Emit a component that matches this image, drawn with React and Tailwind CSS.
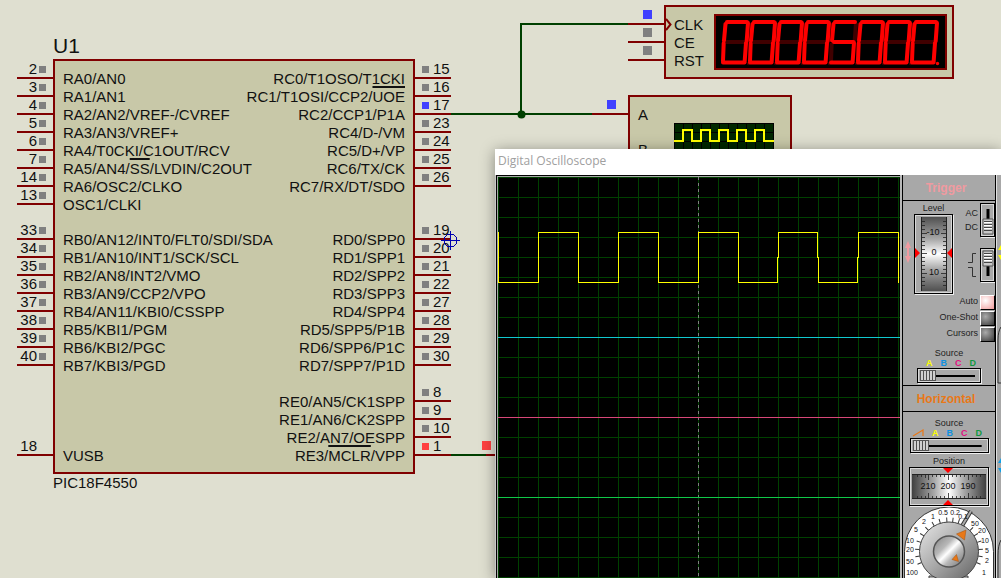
const LEFT_PINS = [
    { n: 2, label: "RA0/AN0" },
    { n: 3, label: "RA1/AN1" },
    { n: 4, label: "RA2/AN2/VREF-/CVREF" },
    { n: 5, label: "RA3/AN3/VREF+" },
    { n: 6, label: "RA4/T0CKI/C1OUT/RCV" },
    { n: 7, label: <>RA5/AN4/<span className="overline decoration-2">SS</span>/LVDIN/C2OUT</> },
    { n: 14, label: "RA6/OSC2/CLKO" },
    { n: 13, label: "OSC1/CLKI" },
    { n: 33, label: "RB0/AN12/INT0/FLT0/SDI/SDA", first: "mt-[17px]" },
    { n: 34, label: "RB1/AN10/INT1/SCK/SCL" },
    { n: 35, label: "RB2/AN8/INT2/VMO" },
    { n: 36, label: "RB3/AN9/CCP2/VPO" },
    { n: 37, label: "RB4/AN11/KBI0/CSSPP" },
    { n: 38, label: "RB5/KBI1/PGM" },
    { n: 39, label: "RB6/KBI2/PGC" },
    { n: 40, label: "RB7/KBI3/PGD" },
    { n: 18, label: "VUSB", first: "mt-[72px]", state: "bg-transparent" },
];

const RIGHT_PINS = [
    { n: 15, label: "RC0/T1OSO/T1CKI" },
    { n: 16, label: <>RC1/T1OSI/CCP2/<span className="overline decoration-2">UOE</span></> },
    { n: 17, label: "RC2/CCP1/P1A", state: "bg-[#4040ff]" },
    { n: 23, label: "RC4/D-/VM" },
    { n: 24, label: "RC5/D+/VP" },
    { n: 25, label: "RC6/TX/CK" },
    { n: 26, label: "RC7/RX/DT/SDO" },
    { n: 19, label: "RD0/SPP0", first: "mt-[35px]" },
    { n: 20, label: "RD1/SPP1" },
    { n: 21, label: "RD2/SPP2" },
    { n: 22, label: "RD3/SPP3" },
    { n: 27, label: "RD4/SPP4" },
    { n: 28, label: "RD5/SPP5/P1B" },
    { n: 29, label: "RD6/SPP6/P1C" },
    { n: 30, label: "RD7/SPP7/P1D" },
    { n: 8, label: "RE0/AN5/CK1SPP", first: "mt-[18px]" },
    { n: 9, label: "RE1/AN6/CK2SPP" },
    { n: 10, label: "RE2/AN7/OESPP" },
    { n: 1, label: <>RE3/<span className="overline decoration-2">MCLR</span>/VPP</>, state: "bg-[#ff4040]" },
];

const PinColumn = ({ pins, right }) => (
    <ul className="w-9 shrink-0 pt-[2px]">
        {pins.map(({ n, first, state }) => (
            <li
                key={n}
                className={`flex h-[18px] items-center border-b-2 border-[#800000] leading-[18px] ${right ? "flex-row-reverse justify-end gap-1 pl-[7px]" : "justify-end gap-[2px] pr-[7px]"} ${first || ""}`}
            >
                <span>{n}</span>
                <span className={`size-[7px] ${state || "bg-[#808080]"}`} />
            </li>
        ))}
    </ul>
);

// the widest names of the two sides never share a row, so the right column may grow over the left one
const LabelColumn = ({ pins, right }) => (
    <ul className={`pt-[9px] whitespace-nowrap ${right ? "w-0" : ""}`}>
        {pins.map(({ n, label, first }) => (
            <li key={n} className={`flex h-[18px] leading-[18px] ${right ? "justify-end" : ""} ${first || ""}`}>
                <span>{label}</span>
            </li>
        ))}
    </ul>
);

const Chip = () => (
    <section className="absolute left-[17px] top-[32px]">
        <h2 className="pl-9 text-[21px] leading-[27px]">U1</h2>
        <div className="flex">
            <PinColumn pins={LEFT_PINS} />
            <div className="flex h-[415px] w-[362px] justify-between border-2 border-[#800000] bg-[#c8c8a8] px-2">
                <LabelColumn pins={LEFT_PINS} />
                <LabelColumn pins={RIGHT_PINS} right />
            </div>
            <PinColumn pins={RIGHT_PINS} right />
        </div>
        <p className="pl-9 leading-[18px]">PIC18F4550</p>
    </section>
);

const Wires = () => (
    <svg className="absolute left-0 top-0" width="700" height="500" fill="none" strokeWidth="2">
        <path d="M451 114H592M521 114V24H628M451 455H486" stroke="#004000" />
        <path d="M592 114H628M628 24H664M628 42H664M628 60H664M486 455H495" stroke="#800000" />
        <circle cx="521.500" cy="114.500" r="4" fill="#004000" />
        <path d="M643 10h9v9h-9zM607 100h9v9h-9z" fill="#4040ff" />
        <path d="M643 28h9v9h-9zM643 46h9v9h-9z" fill="#808080" />
        <path d="M482 441h9v9h-9z" fill="#ff4040" />
        <g stroke="#0000b0" strokeWidth="1" shapeRendering="crispEdges">
            <circle cx="450.500" cy="240.500" r="6.500" />
            <path d="M450.500 231V250M441 240.500H460" />
        </g>
    </svg>
);

// segments in order a b c d e f g
const SEGMENTS = [
    "M13 8H33",
    "M34 9L32.700 27",
    "M32 29L30.700 47",
    "M9 48.500H30.500",
    "M9.700 29L9 47",
    "M11.500 10L10 26.500",
    "M12 28H31.500",
];
const DIGITS = { 0: "1111110", 5: "1011011" };

const CounterDisplay = ({ value }) => (
    <svg className="block h-[52px] w-[229px]" viewBox="2 2 229 52" role="img" aria-label={value}>
        {value.split("").map((d, i) => (
            <g key={i} transform={`translate(${i * 27} 0)`} fill="none" strokeWidth="4">
                {SEGMENTS.map((p, s) => DIGITS[d][s] === "0" && <path key={s} d={p} stroke="#400000" />)}
                {SEGMENTS.map((p, s) => DIGITS[d][s] === "1" && <path key={s} d={p} stroke="#f00" strokeLinecap="round" />)}
                <circle cx="34.500" cy="49.500" r="1.700" fill={i === 7 ? "#f00" : "#400000"} />
            </g>
        ))}
    </svg>
);

const Counter = () => (
    <section className="absolute left-[664px] top-[5px] flex h-[74px] w-[290px] justify-between border-2 border-[#800000] bg-[#c8c8a8] py-[7px] pl-2 pr-[5px]">
        <svg className="absolute left-0 top-[11px]" width="6" height="13" fill="none">
            <path d="M0 1L4.500 6.500L0 12" stroke="#800000" strokeWidth="2" />
        </svg>
        <ul className="pt-[2px] leading-[18px]">
            <li>CLK</li>
            <li>CE</li>
            <li>RST</li>
        </ul>
        <div className="h-[56px] border-2 border-[#800000] bg-black">
            <CounterDisplay value="00005000" />
        </div>
    </section>
);

const ScopeSymbol = () => (
    <section className="absolute left-[628px] top-[95px] flex h-[120px] w-[164px] justify-between border-2 border-[#800000] bg-[#c8c8a8] pl-2 pr-4">
        <ul className="pt-[9px] leading-[18px]">
            <li>A</li>
            <li className="mt-[17px]">B</li>
        </ul>
        <svg className="mt-[26px]" width="100" height="60" fill="none">
            <rect width="100" height="60" fill="#002800" />
            <path d="M.5 0V60M9.500 0V60M18.500 0V60M27.500 0V60M36.500 0V60M45.500 0V60M54.500 0V60M63.500 0V60M72.500 0V60M81.500 0V60M90.500 0V60M99.500 0V60M0 .5H100M0 9.500H100M0 18.500H100" stroke="#000" />
            <path d="M0 18H9V7H18V18H27V7H36V18H45V7H54V18H63V7H72V18H81V7H90V18H100" stroke="#ff0" strokeWidth="2" />
        </svg>
    </section>
);

const ScopeScreen = () => (
    <div className="min-w-0 flex-1 border-l border-t border-black">
        <svg className="block h-full w-full border-l border-t border-[#a8a8a8] bg-black" fill="none" shapeRendering="crispEdges">
            <defs>
                <pattern id="grid" width="20" height="20" patternUnits="userSpaceOnUse">
                    <path d="M.5 0V20M0 .5H20" stroke="#004000" />
                </pattern>
            </defs>
            <rect width="100%" height="100%" fill="url(#grid)" />
            <path d="M200.500 0V900" stroke="#808080" strokeDasharray="3 3" />
            <path d="M0 160.500H4000" stroke="#10c8d0" />
            <path d="M0 240.500H4000" stroke="#d84878" />
            <path d="M0 320.500H4000" stroke="#10c848" />
            <path
                d="M.5 55V105.500H40.500V55.500H80.500V105.500H120.500V55.500H160.500V105.500H200.500V55.500H240.500V105.500H279.500V80.500H280.500V55.500H319.500V80.500H320.500V105.500H359.500V80.500H360.500V55.500H400.500V105.500"
                stroke="#ff0"
            />
        </svg>
    </div>
);

const BEVEL = "border border-black shadow-[inset_0_0_0_1px_#d8d8d8,1px_1px_0_#eee]";

const ToggleSwitch = ({ label, up }) => (
    <label className={`relative block h-[34px] w-[15px] ${BEVEL}`}>
        <input type="checkbox" defaultChecked={up} aria-label={label} className="absolute inset-0 h-full w-full cursor-pointer opacity-0" />
        <svg width="13" height="32" fill="none">
            <path d="M7 5V27" stroke="#000" strokeWidth="3" />
            <g transform={up ? "translate(2 2)" : "translate(2 15)"}>
                <path d="M0 0H10V15H0Z" fill="#c8c8c8" stroke="#555" />
                <path d="M1 2.500H9M1 5.500H9M1 8.500H9M1 11.500H9" stroke="#444" />
                <path d="M1 3.500H9M1 6.500H9M1 9.500H9" stroke="#fff" />
            </g>
        </svg>
    </label>
);

const PushButton = ({ children, lit }) => (
    <button type="button" className="flex h-4 cursor-pointer items-center justify-end gap-[2px]">
        {children}
        <span
            className={`size-[15px] border border-white border-b-black border-r-black ${lit ? "bg-radial-[at_35%_35%] from-white to-[#f09a9a]" : "bg-radial-[at_35%_35%] from-[#aaa] to-[#383838]"}`}
        />
    </button>
);

const SourceSlider = ({ id, ramp }) => (
    <div className="flex flex-col items-center">
        <label htmlFor={id} className="h-[10px] leading-[10px]">Source</label>
        <div className={`flex h-[10px] items-center gap-2 font-bold leading-[10px] ${ramp ? "pr-1" : "pl-1"}`}>
            {ramp && (
                <svg width="12" height="8" fill="none">
                    <path d="M1 7L11 1V7" stroke="#e87818" strokeWidth="1.200" />
                </svg>
            )}
            <span className="text-[#ffff00]">A</span>
            <span className="text-[#1090e0]">B</span>
            <span className="text-[#e01080]">C</span>
            <span className="text-[#109840]">D</span>
        </div>
        <input
            id={id}
            type="range"
            min="0"
            max="4"
            defaultValue="0"
            className={`h-[15px] cursor-pointer appearance-none bg-[linear-gradient(#000,#000)] bg-[length:84%_2px] bg-center bg-no-repeat px-[2px] [&::-webkit-slider-thumb]:h-[11px] [&::-webkit-slider-thumb]:w-4 [&::-webkit-slider-thumb]:appearance-none [&::-webkit-slider-thumb]:border [&::-webkit-slider-thumb]:border-[#555] [&::-webkit-slider-thumb]:bg-[repeating-linear-gradient(90deg,#d0d0d0_0_2px,#505050_2px_3px)] ${BEVEL} ${ramp ? "w-[79px]" : "w-[64px]"}`}
        />
    </div>
);

const LevelDial = () => (
    <div className={`relative h-[80px] w-[39px] ${BEVEL}`}>
        <input id="level" type="range" min="-100" max="100" className="absolute inset-0 h-full w-full cursor-pointer opacity-0" />
        <svg width="37" height="78">
            <defs>
                <linearGradient id="drumV" x2="0" y2="1">
                    <stop offset="0" stopColor="#505050" />
                    <stop offset=".3" stopColor="#a8a8a8" />
                    <stop offset=".5" stopColor="#fff" />
                    <stop offset=".7" stopColor="#a8a8a8" />
                    <stop offset="1" stopColor="#505050" />
                </linearGradient>
            </defs>
            <rect x="6" y="2" width="26" height="74" fill="url(#drumV)" />
            <path d="M6.500 2V76M31.500 2V76" stroke="#222" />
            <path d="M7 6.500h3M7 10.500h3M7 14.500h3M7 18.500h5M7 22.500h3M7 26.500h3M7 30.500h3M7 34.500h3M7 38.500h5M7 42.500h3M7 46.500h3M7 50.500h3M7 54.500h3M7 58.500h5M7 62.500h3M7 66.500h3M7 70.500h3M28 6.500h3M28 10.500h3M28 14.500h3M26 18.500h5M28 22.500h3M28 26.500h3M28 30.500h3M28 34.500h3M26 38.500h5M28 42.500h3M28 46.500h3M28 50.500h3M28 54.500h3M26 58.500h5M28 62.500h3M28 66.500h3M28 70.500h3" stroke="#222" strokeOpacity=".8" />
            <path d="M0 33L5 38L0 43ZM37 33L32 38L37 43Z" fill="#f00" />
            <g fontSize="9" textAnchor="middle" fill="#111">
                <text x="18" y="20">-10</text>
                <text x="19" y="40">0</text>
                <text x="19" y="60">10</text>
            </g>
        </svg>
    </div>
);

const PositionDial = () => (
    <div className={`relative h-[39px] w-[80px] ${BEVEL}`}>
        <input id="position" type="range" min="0" max="400" className="absolute inset-0 h-full w-full cursor-pointer opacity-0" />
        <svg width="78" height="37">
            <defs>
                <linearGradient id="drumH">
                    <stop offset="0" stopColor="#404040" />
                    <stop offset=".3" stopColor="#a8a8a8" />
                    <stop offset=".5" stopColor="#fff" />
                    <stop offset=".7" stopColor="#a8a8a8" />
                    <stop offset="1" stopColor="#404040" />
                </linearGradient>
            </defs>
            <rect x="2" y="6" width="74" height="25" fill="url(#drumH)" />
            <path d="M2 6.500H76M2 30.500H76" stroke="#222" />
            <path d="M7.500 7v2M11.500 7v2M15.500 7v3M18.500 7v5M22.500 7v2M26.500 7v2M30.500 7v2M34.500 7v2M38.500 7v5M42.500 7v2M46.500 7v2M50.500 7v2M54.500 7v2M58.500 7v5M62.500 7v2M66.500 7v2M70.500 7v2M7.500 30v-2M11.500 30v-2M15.500 30v-2M18.500 30v-5M22.500 30v-2M26.500 30v-2M30.500 30v-2M34.500 30v-2M38.500 30v-5M42.500 30v-2M46.500 30v-2M50.500 30v-2M54.500 30v-2M58.500 30v-5M62.500 30v-2M66.500 30v-2M70.500 30v-2" stroke="#222" strokeOpacity=".8" />
            <path d="M33 0H43L38 5ZM33 37H43L38 32Z" fill="#f00" />
            <g fontSize="9" textAnchor="middle" fill="#111">
                <text x="18" y="21">210</text>
                <text x="38" y="21">200</text>
                <text x="58" y="21">190</text>
            </g>
        </svg>
    </div>
);

const KNOB_MARKS = [
    ["0.5", 39, 6], ["0.2", 51, 6], ["0.1", 59, 10], ["1", 29, 10], ["2", 20, 15], ["5", 12, 23],
    ["10", 6, 34], ["20", 6, 43], ["50", 6, 55], ["100", 8, 66],
    ["50", 71, 17], ["20", 78, 24], ["10", 81, 34], ["5", 83, 44], ["2", 83, 54], ["1", 80, 66],
];

const TimebaseKnob = () => (
    <svg className="block" width="90" height="110" role="img" aria-label="Timebase">
        <defs>
            <linearGradient id="rim" x2="1" y2="1">
                <stop offset="0" stopColor="#e8e8e8" />
                <stop offset=".5" stopColor="#a8a8a8" />
                <stop offset="1" stopColor="#606060" />
            </linearGradient>
            <linearGradient id="cap" x2="1" y2="1">
                <stop offset="0" stopColor="#808080" />
                <stop offset=".35" stopColor="#b8b8b8" />
                <stop offset=".5" stopColor="#fff" />
                <stop offset=".65" stopColor="#b8b8b8" />
                <stop offset="1" stopColor="#707070" />
            </linearGradient>
        </defs>
        <path d="M.5 110V45.500A44.500 44.500 0 0 1 89.500 45.500V110Z" fill="#fff" stroke="#333" />
        <path d="M25 110V70H64V110Z" fill="#a8a8a8" stroke="#444" />
        {[-112, -99, -86, -72, -58, -44, -30, -17, -4, 7, 18, 45, 58, 72, 86, 99, 112].map((a) => (
            <path key={a} d="M45 11.500V16" stroke="#333" transform={`rotate(${a} 45 45.500)`} />
        ))}
        <path d="M67 5L58 20" stroke="#333" strokeWidth="4" />
        <path d="M67 5L58 20" stroke="#aaa" strokeWidth="2" />
        <g fontSize="7" textAnchor="middle" fill="#111">
            {KNOB_MARKS.map(([t, x, y]) => <text key={`${t}-${x}`} x={x} y={y + 2.5}>{t}</text>)}
        </g>
        <circle cx="45" cy="45.500" r="29.500" fill="url(#rim)" stroke="#444" />
        <circle cx="45" cy="45.500" r="15.500" fill="url(#cap)" stroke="#555" strokeWidth="1.500" />
        <path d="M52.500 28L62 24L60.500 34ZM48 53.500L52.500 48.500L54.500 55.500Z" fill="#e87818" stroke="#a05010" strokeWidth=".5" />
    </svg>
);

const PanelTitle = ({ children, color }) => (
    <h3 className={`h-[26px] shrink-0 border-b border-black pr-[6px] text-center text-[12px] font-bold leading-[26px] ${color}`}>{children}</h3>
);

const ControlPanel = () => (
    <aside className="flex w-[94px] shrink-0 flex-col overflow-hidden border-x border-black bg-[#a8a8a8] text-[9px] text-[#222]">
        <PanelTitle color="text-[#f09aa0]">Trigger</PanelTitle>
        <div className="flex h-[185px] shrink-0 flex-col border-b border-black pt-[2px]">
            <div className="flex h-[91px]">
                <svg className="mt-[38px]" width="8" height="22" fill="#f09aa0">
                    <path d="M5 0L8 7H6V15H8L5 22L2 15H4V7H2Z" />
                </svg>
                <div className="ml-[3px] flex flex-col items-center">
                    <label htmlFor="level" className="h-[11px] leading-[10px]">Level</label>
                    <LevelDial />
                </div>
                <div className="ml-auto flex flex-col gap-[11px]">
                    <div className="flex items-center gap-[2px]">
                        <div className="text-right leading-[14px]">
                            <p>AC</p>
                            <p>DC</p>
                        </div>
                        <ToggleSwitch label="DC coupling" />
                    </div>
                    <div className="flex items-center justify-end gap-1">
                        <svg width="8" height="26" fill="none" stroke="#333">
                            <path d="M0 10.500H4.500V1.500H8M0 15.500H4.500V24.500H8" />
                        </svg>
                        <ToggleSwitch label="Rising edge" up />
                    </div>
                </div>
            </div>
            <div className="flex flex-col items-end">
                <PushButton lit>Auto</PushButton>
                <PushButton>One-Shot</PushButton>
                <PushButton>Cursors</PushButton>
            </div>
            <div className="mt-[6px]">
                <SourceSlider id="trigger-source" />
            </div>
        </div>
        <PanelTitle color="text-[#e87818]">Horizontal</PanelTitle>
        <div className="flex flex-col items-center pt-[6px]">
            <SourceSlider id="horizontal-source" ramp />
            <label htmlFor="position" className="mt-[2px] h-[12px] leading-[12px]">Position</label>
            <PositionDial />
            <TimebaseKnob />
        </div>
    </aside>
);

const ScopeWindow = () => (
    <main className="absolute bottom-0 left-[495px] right-0 top-[149px] flex flex-col bg-white shadow-[0_2px_14px_rgba(0,0,0,0.4)]">
        <h1 className="h-[26px] shrink-0 pl-[3px] font-['Open_Sans',sans-serif] text-[12px] leading-[24px] text-[#a0a0a0]">Digital Oscilloscope</h1>
        <div className="flex min-h-0 flex-1 bg-[#c8c8c8] pl-px">
            <ScopeScreen />
            <div className="w-[2px] bg-[#b8b8b8]" />
            <ControlPanel />
            <svg className="w-[5px] shrink-0 border-l border-[#e0e0e0] bg-[#a8a8a8]" height="403" fill="none">
                <path d="M4 70L1 75H4ZM4 85L1 80H4Z" fill="#ff0" />
                <path d="M4 283L1 288H4ZM4 298L1 293H4Z" fill="#10a0e8" />
                <path d="M4 152Q1 156 1 165V208H4M4 365Q1 370 1 380V403" stroke="#333" />
            </svg>
        </div>
    </main>
);

const App = () => (
    <div className="relative h-screen w-full overflow-hidden bg-[#dfdfd0] font-['Liberation_Sans',Arial,sans-serif] text-[15px] text-[#111]">
        <Counter />
        <ScopeSymbol />
        <Chip />
        <Wires />
        <ScopeWindow />
    </div>
);

export default App;
